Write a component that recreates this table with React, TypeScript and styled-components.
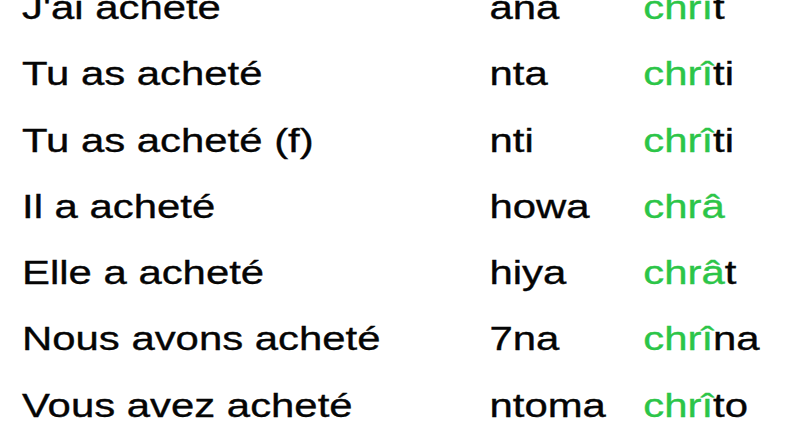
import React from "react";
import styled, { createGlobalStyle } from "styled-components";

const GlobalStyle = createGlobalStyle`
  html, body {
    margin: 0;
    padding: 0;
    background: #ffffff;
    overflow: hidden;
  }
`;

type Row = { fr: string; pron: string; stem: string; end: string };

const rows: Row[] = [
  { fr: "J'ai acheté", pron: "ana", stem: "chrî", end: "t" },
  { fr: "Tu as acheté", pron: "nta", stem: "chrî", end: "ti" },
  { fr: "Tu as acheté (f)", pron: "nti", stem: "chrî", end: "ti" },
  { fr: "Il a acheté", pron: "howa", stem: "chrâ", end: "" },
  { fr: "Elle a acheté", pron: "hiya", stem: "chrâ", end: "t" },
  { fr: "Nous avons acheté", pron: "7na", stem: "chrî", end: "na" },
  { fr: "Vous avez acheté", pron: "ntoma", stem: "chrî", end: "to" },
];

const App: React.FC = () => {
  return (
    <Page>
      <GlobalStyle />
      <Table>
        {rows.map((r) => (
          <Line key={r.fr}>
            <Cell>{r.fr}</Cell>
            <Cell>{r.pron}</Cell>
            <Cell>
              <Stem>{r.stem}</Stem>
              {r.end}
            </Cell>
          </Line>
        ))}
      </Table>
    </Page>
  );
};

const Page = styled.div`
  width: 800px;
  height: 445px;
  background: #ffffff;
  overflow: hidden;
  padding-left: 22px;
  box-sizing: border-box;
`;

const Table = styled.div`
  display: flex;
  flex-direction: column;
  margin-top: -25px;
  transform: scaleX(1.25);
  transform-origin: left top;
  font-family: "Liberation Sans", Arial, sans-serif;
  font-size: 33.5px;
  color: #050505;
  -webkit-text-stroke: 0.35px currentColor;
`;

const Line = styled.div`
  display: grid;
  grid-template-columns: 374px 123px 1fr;
  height: 66.3px;
  line-height: 66.3px;
  white-space: nowrap;
`;

const Cell = styled.div``;

const Stem = styled.span`
  color: #2cc548;
`;

export default App;
